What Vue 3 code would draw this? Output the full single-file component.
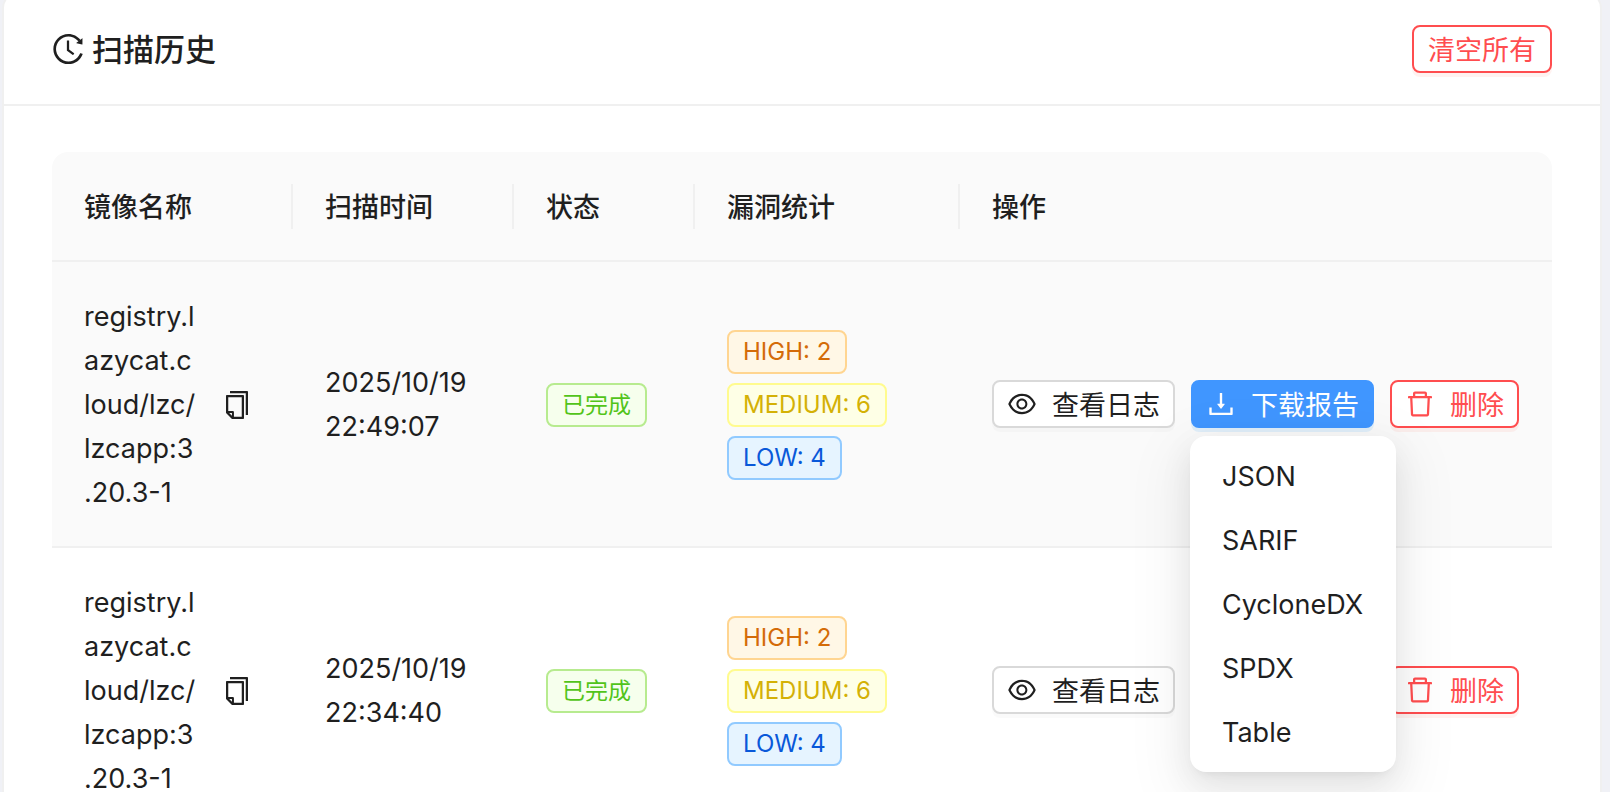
<script setup>
import { ref } from 'vue'

const records = ref([
  { id: 1, image: 'registry.lazycat.cloud/lzc/lzcapp:3.20.3-1', date: '2025/10/19', time: '22:49:07', high: 2, medium: 6, low: 4 },
  { id: 2, image: 'registry.lazycat.cloud/lzc/lzcapp:3.20.3-1', date: '2025/10/19', time: '22:34:40', high: 2, medium: 6, low: 4 }
])

const formats = ['JSON', 'SARIF', 'CycloneDX', 'SPDX', 'Table']

// 当前行以及展开的下载菜单
const activeId = ref(1)
const openMenuId = ref(1)

const toggleMenu = (id) => {
  openMenuId.value = openMenuId.value === id ? null : id
}

const downloadReport = (record, format) => {
  console.log('下载报告:', record.image, format)
  openMenuId.value = null
}

const copyName = (name) => {
  navigator.clipboard?.writeText(name)
}

const removeRecord = (id) => {
  records.value = records.value.filter(item => item.id !== id)
}

const clearAll = () => {
  records.value = []
}
</script>

<template>
  <main class="page">
    <section class="card">
      <header class="card-header">
        <h1 class="card-title">
          <svg class="icon icon-title" viewBox="0 0 1024 1024" aria-hidden="true">
            <path d="M536.1 273H488c-4.4 0-8 3.6-8 8v275.3c0 2.6 1.2 5 3.3 6.5l165.3 120.7c3.6 2.6 8.6 1.9 11.2-1.7l28.6-39c2.7-3.7 1.9-8.7-1.7-11.2L544.1 528.5V281c0-4.4-3.6-8-8-8zm219.8 75.2l156.8 38.3c5 1.2 9.9-2.6 9.9-7.7l.8-161.5c0-6.7-7.7-10.5-12.9-6.3L752.9 334.1a8 8 0 003 14.1zm167.7 301.1l-56.7-19.5a8 8 0 00-10.1 4.8c-1.9 5.1-3.9 10.1-6 15.1-17.8 42.1-43.3 80-75.9 112.5a353 353 0 01-112.5 75.9 352.18 352.18 0 01-137.7 27.8c-47.8 0-94.1-9.3-137.7-27.8a353 353 0 01-112.5-75.9c-32.5-32.5-58-70.4-75.9-112.5A353.44 353.44 0 01171 512c0-47.8 9.3-94.2 27.8-137.8 17.8-42.1 43.3-80 75.9-112.5a353 353 0 01112.5-75.9C430.6 167.3 477 158 524.8 158s94.1 9.3 137.7 27.8A353 353 0 01775 261.7c10.2 10.3 19.8 21 28.6 32.3l59.8-46.8C784.7 146.6 662.2 81.9 524.6 82 285 82.1 92.6 276.7 95 516.4 97.4 751.9 288.9 942 524.8 942c185.5 0 343.5-117.6 403.7-282.3 1.5-4.2-.7-8.9-4.9-10.4z" />
          </svg>
          <span>扫描历史</span>
        </h1>
        <button type="button" class="btn btn-danger btn-text-only" @click="clearAll"><span>清空所有</span></button>
      </header>

      <div class="card-body">
        <table class="history-table">
          <colgroup>
            <col class="col-name" />
            <col class="col-time" />
            <col class="col-status" />
            <col class="col-stats" />
            <col />
          </colgroup>
          <thead>
            <tr>
              <th scope="col">镜像名称</th>
              <th scope="col">扫描时间</th>
              <th scope="col">状态</th>
              <th scope="col">漏洞统计</th>
              <th scope="col">操作</th>
            </tr>
          </thead>
          <tbody>
            <tr
              v-for="record in records"
              :key="record.id"
              :class="{ 'is-active': record.id === activeId }"
              @mouseenter="activeId = record.id"
            >
              <td>
                <div class="name-cell">
                  <span class="image-name">{{ record.image }}</span>
                  <button type="button" class="copy-btn" aria-label="复制" @click="copyName(record.image)">
                    <svg class="icon" viewBox="0 0 1024 1024" aria-hidden="true">
                      <path d="M832 64H296c-4.4 0-8 3.6-8 8v56c0 4.4 3.6 8 8 8h496v688c0 4.4 3.6 8 8 8h56c4.4 0 8-3.6 8-8V96c0-17.7-14.3-32-32-32zM704 192H192c-17.7 0-32 14.3-32 32v530.7c0 8.5 3.4 16.6 9.4 22.6l173.3 173.3c2.2 2.2 4.7 4 7.4 5.5v1.9h4.2c3.5 1.3 7.2 2 11 2H704c17.7 0 32-14.3 32-32V224c0-17.7-14.3-32-32-32zM350 856.2L263.9 770H350v86.2zM664 888H414V746c0-22.1-17.9-40-40-40H232V264h432v624z" />
                    </svg>
                  </button>
                </div>
              </td>
              <td>{{ record.date }} {{ record.time }}</td>
              <td>
                <div class="tags">
                  <span class="tag tag-success">已完成</span>
                </div>
              </td>
              <td>
                <div class="tags">
                  <span class="tag tag-high">HIGH: {{ record.high }}</span>
                  <span class="tag tag-medium">MEDIUM: {{ record.medium }}</span>
                  <span class="tag tag-low">LOW: {{ record.low }}</span>
                </div>
              </td>
              <td class="action-cell">
                <div class="actions">
                  <button type="button" class="btn">
                    <svg class="icon" viewBox="0 0 1024 1024" aria-hidden="true">
                      <path d="M942.2 486.2C847.4 286.5 704.1 186 512 186c-192.2 0-335.4 100.5-430.2 300.3a60.3 60.3 0 000 51.5C176.6 737.5 319.9 838 512 838c192.2 0 335.4-100.5 430.2-300.3 7.7-16.2 7.7-35 0-51.5zM512 766c-161.3 0-279.4-81.8-362.7-254C232.6 339.8 350.7 258 512 258c161.3 0 279.4 81.8 362.7 254C791.5 684.2 673.4 766 512 766zm-4-430c-97.2 0-176 78.8-176 176s78.8 176 176 176 176-78.8 176-176-78.8-176-176-176zm0 288c-61.9 0-112-50.1-112-112s50.1-112 112-112 112 50.1 112 112-50.1 112-112 112z" />
                    </svg>
                    <span>查看日志</span>
                  </button>
                  <div class="dropdown">
                    <button
                      type="button"
                      class="btn btn-primary"
                      aria-haspopup="menu"
                      :aria-expanded="openMenuId === record.id"
                      @click="toggleMenu(record.id)"
                    >
                      <svg class="icon" viewBox="0 0 1024 1024" aria-hidden="true">
                        <path d="M505.7 661a8 8 0 0012.6 0l112-141.7c4.1-5.2.4-12.9-6.3-12.9h-74.1V168c0-4.4-3.6-8-8-8h-60c-4.4 0-8 3.6-8 8v338.3H400c-6.7 0-10.4 7.7-6.3 12.9l112 141.8zM878 626h-60c-4.4 0-8 3.6-8 8v154H214V634c0-4.4-3.6-8-8-8h-60c-4.4 0-8 3.6-8 8v198c0 17.7 14.3 32 32 32h684c17.7 0 32-14.3 32-32V634c0-4.4-3.6-8-8-8z" />
                      </svg>
                      <span>下载报告</span>
                    </button>
                    <div v-if="openMenuId === record.id" class="menu" role="menu">
                      <button
                        v-for="format in formats"
                        :key="format"
                        type="button"
                        role="menuitem"
                        class="menu-item"
                        @click="downloadReport(record, format)"
                      >
                        {{ format }}
                      </button>
                    </div>
                  </div>
                  <button type="button" class="btn btn-danger" @click="removeRecord(record.id)">
                    <svg class="icon" viewBox="0 0 1024 1024" aria-hidden="true">
                      <path d="M360 184h-8c4.4 0 8-3.6 8-8v8h304v-8c0 4.4 3.6 8 8 8h-8v72h72v-80c0-35.3-28.7-64-64-64H352c-35.3 0-64 28.7-64 64v80h72v-72zm504 72H160c-17.7 0-32 14.3-32 32v32c0 4.4 3.6 8 8 8h60.4l24.7 523c1.6 34.1 29.8 61 63.9 61h454c34.2 0 62.3-26.8 63.9-61l24.7-523H888c4.4 0 8-3.6 8-8v-32c0-17.7-14.3-32-32-32zM731.3 840H292.7l-24.2-512h487l-24.2 512z" />
                    </svg>
                    <span>删除</span>
                  </button>
                </div>
              </td>
            </tr>
          </tbody>
        </table>
      </div>
    </section>
  </main>
</template>

<style>
body {
  margin: 0;
  background: #f0f1f6;
}
</style>

<style scoped>
.page {
  height: 100vh;
  overflow: hidden;
  padding: 0 8px 0 2px;
  box-sizing: border-box;
  font-family: Inter, 'Noto Sans CJK SC', sans-serif;
  font-size: 27px;
  line-height: 44px;
  color: #1f1f1f;
}

.card {
  margin-top: -8px;
  background: #fff;
  border: 2px solid #f0f0f0;
  border-radius: 16px;
}

.card-header {
  display: flex;
  align-items: center;
  justify-content: space-between;
  height: 110px;
  padding: 0 48px 0 46px;
  border-bottom: 2px solid #f0f0f0;
}

.card-title {
  display: flex;
  align-items: center;
  gap: 6px;
  margin: 0;
  font-size: 31px;
  font-weight: 500;
}

.card-title span {
  padding-top: 2px;
}

.card-body {
  padding: 46px 48px 48px;
}

.icon {
  flex: none;
  width: 32px;
  height: 32px;
  fill: currentColor;
}

.icon-title {
  width: 36px;
  height: 36px;
}

/* 表格 */
.history-table {
  width: 100%;
  table-layout: fixed;
  border-collapse: separate;
  border-spacing: 0;
}

.col-name {
  width: 241px;
}

.col-time {
  width: 221px;
}

.col-status {
  width: 181px;
}

.col-stats {
  width: 265px;
}

.history-table th,
.history-table td {
  padding: 33px 32px 31px;
  border-bottom: 2px solid #f0f0f0;
  text-align: left;
  vertical-align: middle;
}

.history-table th {
  padding: 34px 32px 30px;
  font-weight: 500;
  background: #fafafa linear-gradient(#f0f0f0, #f0f0f0) right center / 2px 45px no-repeat;
}

.history-table .action-cell {
  padding: 32px;
}

.history-table th:first-child {
  border-top-left-radius: 16px;
}

.history-table th:last-child {
  border-top-right-radius: 16px;
  background-image: none;
}

.is-active td {
  background: #fafafa;
}

.name-cell {
  display: flex;
  align-items: center;
  gap: 16px;
}

.image-name {
  flex: 1;
  line-break: anywhere;
}

.copy-btn {
  display: flex;
  padding: 8px;
  border: none;
  background: none;
  color: inherit;
  cursor: pointer;
}

/* 标签 */
.tags {
  display: flex;
  flex-direction: column;
  align-items: flex-start;
  gap: 9px;
}

.tag {
  padding: 0 14px;
  border: 2px solid;
  border-radius: 8px;
  font-size: 24px;
  line-height: 40px;
  white-space: nowrap;
}

.tag-success {
  font-size: 23px;
  color: #52c41a;
  background: #f6ffed;
  border-color: #b7eb8f;
}

.tag-high {
  color: #d46b08;
  background: #fff7e6;
  border-color: #ffd591;
}

.tag-medium {
  color: #d4b106;
  background: #feffe6;
  border-color: #fffb8f;
}

.tag-low {
  color: #0958d9;
  background: #e6f4ff;
  border-color: #91caff;
}

/* 按钮 */
.actions {
  display: flex;
  gap: 16px;
}

.btn {
  display: flex;
  align-items: center;
  gap: 14px;
  padding: 0 13px 0 12px;
  border: 2px solid #d9d9d9;
  border-radius: 8px;
  background: #fff;
  box-shadow: 0 4px 0 rgba(0, 0, 0, 0.02);
  color: #1f1f1f;
  font-family: inherit;
  font-size: 27px;
  line-height: 40px;
  white-space: nowrap;
  cursor: pointer;
}

.btn span {
  padding-top: 4px;
}

.btn-primary {
  border-color: #4096ff;
  background: #4096ff;
  box-shadow: 0 4px 0 rgba(5, 145, 255, 0.1);
  color: #fff;
}

.btn-danger {
  border-color: #ff4d4f;
  box-shadow: 0 4px 0 rgba(255, 38, 5, 0.06);
  color: #ff4d4f;
}

.btn-text-only {
  padding: 0 14px;
}

/* 下载菜单 */
.dropdown {
  position: relative;
}

.menu {
  position: absolute;
  z-index: 10;
  top: calc(100% + 8px);
  left: -1px;
  box-sizing: border-box;
  min-width: 206px;
  padding: 8px;
  border-radius: 16px;
  background: #fff;
  box-shadow:
    0 12px 32px 0 rgba(0, 0, 0, 0.08),
    0 6px 12px -8px rgba(0, 0, 0, 0.12),
    0 18px 56px 16px rgba(0, 0, 0, 0.05);
}

.menu-item {
  display: block;
  width: 100%;
  padding: 11px 24px 9px;
  border: none;
  border-radius: 8px;
  background: none;
  color: #1f1f1f;
  font-family: inherit;
  font-size: 27px;
  line-height: 44px;
  text-align: left;
  cursor: pointer;
}

.menu-item:hover {
  background: #f5f5f5;
}
</style>
